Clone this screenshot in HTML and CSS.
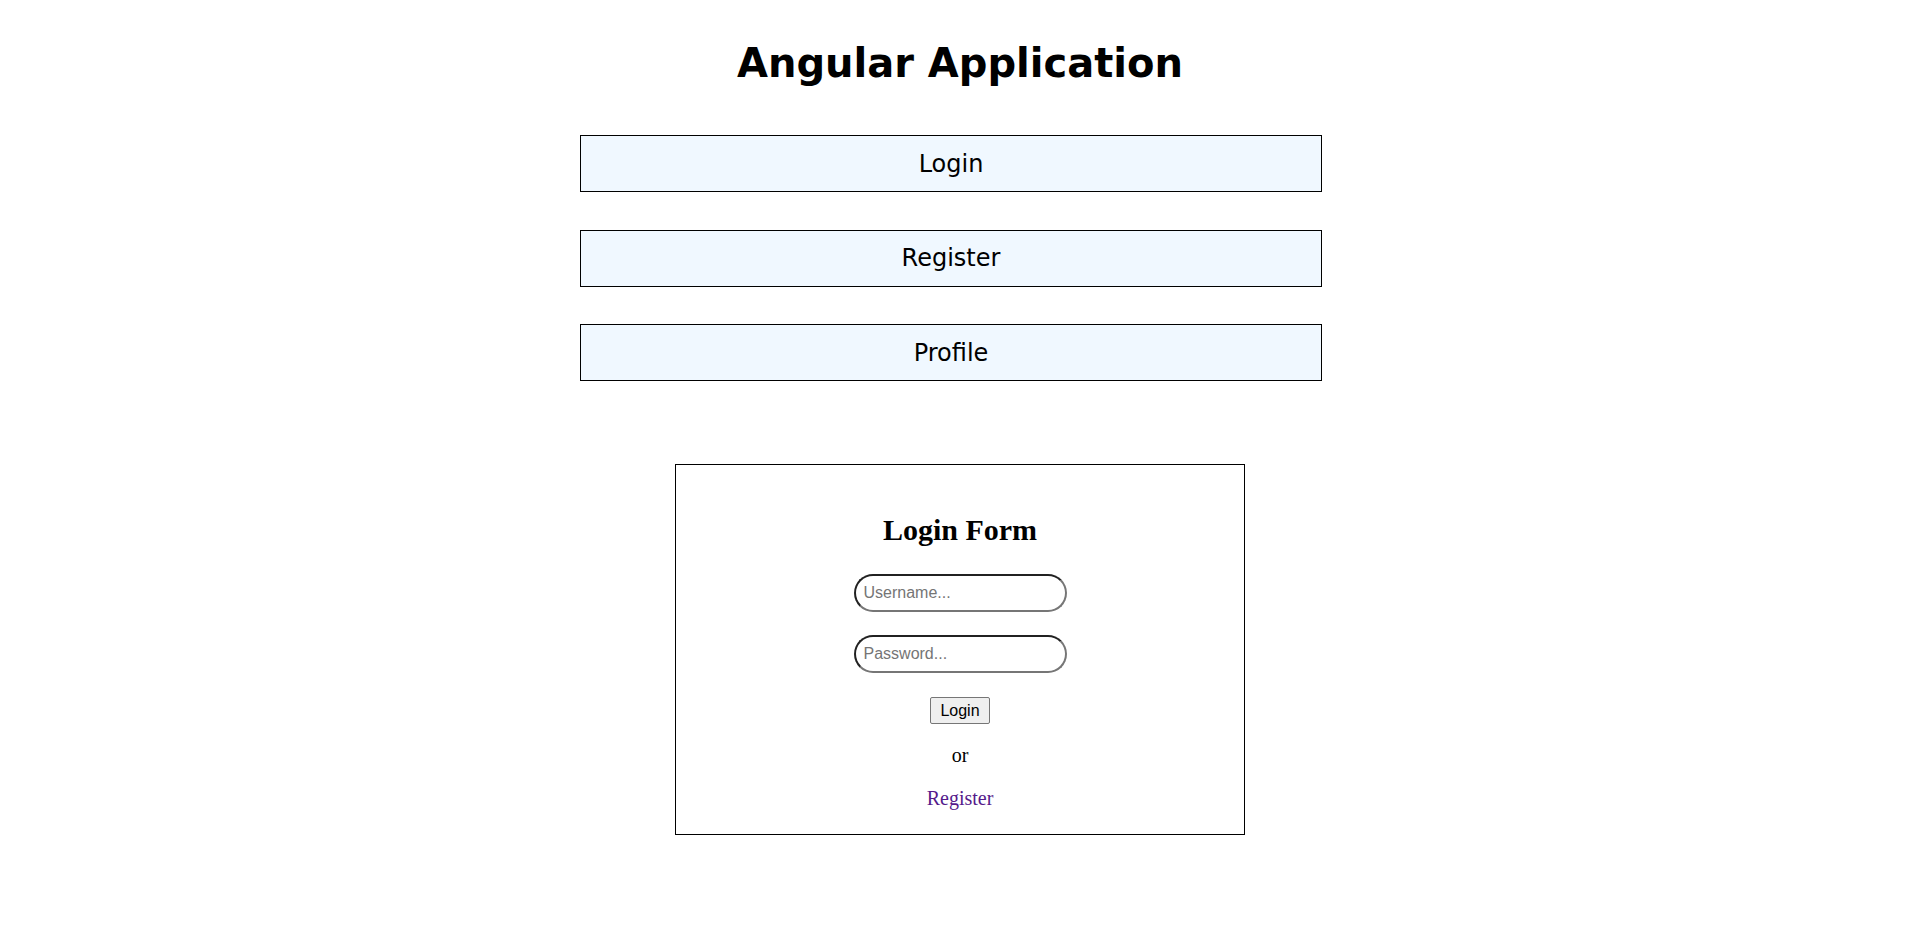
FILE: index.html
```html
<!DOCTYPE html>
<html lang="en">
<head>
<meta charset="utf-8">
<title>Angular Application</title>
<link rel="stylesheet" href="styles.css">
</head>
<body>
  <div class="app">
    <h1 class="app-title">Angular Application</h1>
    <nav class="nav">
      <button class="nav-btn" type="button">Login</button>
      <button class="nav-btn" type="button">Register</button>
      <button class="nav-btn" type="button">Profile</button>
    </nav>
    <section class="login-card">
      <h2 class="login-title">Login Form</h2>
      <input class="field" type="text" placeholder="Username...">
      <input class="field field-password" type="password" placeholder="Password...">
      <button class="submit-btn" type="button">Login</button>
      <p class="or-text">or</p>
      <a class="register-link" href="#">Register</a>
    </section>
  </div>
</body>
</html>
```
FILE: styles.css
```css
html, body {
  margin: 0;
  padding: 0;
  background: #ffffff;
}

.app {
  padding-top: 40px;
  display: flex;
  flex-direction: column;
}

.app-title {
  margin: 0;
  font-family: "DejaVu Sans", Verdana, sans-serif;
  font-weight: bold;
  font-size: 40px;
  line-height: 46px;
  text-align: center;
  color: #000;
}

.nav {
  width: 742px;
  margin-left: calc(50% - 380px);
  margin-top: 49px;
  display: flex;
  flex-direction: column;
  gap: 37.5px;
}

.nav-btn {
  box-sizing: border-box;
  height: 57px;
  width: 100%;
  margin: 0;
  padding: 0;
  background: #f0f8ff;
  border: 1px solid #000;
  border-radius: 0;
  font-family: "DejaVu Sans", Verdana, sans-serif;
  font-size: 24px;
  line-height: 28px;
  color: #000;
  display: flex;
  align-items: center;
  justify-content: center;
}

.login-card {
  box-sizing: border-box;
  width: 570px;
  margin: 83px auto 0;
  border: 1px solid #000;
  padding: 48px 0 24px;
  display: flex;
  flex-direction: column;
  align-items: center;
  font-family: "Liberation Serif", "Times New Roman", serif;
}

.login-title {
  margin: 0 0 27px;
  font-size: 30px;
  line-height: 34px;
  font-weight: bold;
  color: #000;
}

.field {
  box-sizing: border-box;
  width: 213px;
  height: 38px;
  margin: 0;
  padding: 8px 8px;
  border: 2px inset #767676;
  border-radius: 20px;
  font-family: "Liberation Sans", Arial, sans-serif;
  font-size: 16px;
  color: #000;
  background: #fff;
  outline: none;
}

.field::placeholder {
  color: #757575;
}

.field-password {
  margin-top: 23px;
}

.submit-btn {
  box-sizing: border-box;
  margin-top: 24px;
  height: 27px;
  width: 60px;
  padding: 0;
  border: 1px solid #767676;
  border-radius: 2px;
  background: #efefef;
  font-family: "Liberation Sans", Arial, sans-serif;
  font-size: 16px;
  line-height: 18px;
  color: #000;
}

.or-text {
  margin: 20px 0 0;
  font-size: 20px;
  line-height: 23px;
  color: #000;
}

.register-link {
  margin-top: 20px;
  font-size: 20px;
  line-height: 23px;
  color: #551a8b;
  text-decoration: none;
}
```
